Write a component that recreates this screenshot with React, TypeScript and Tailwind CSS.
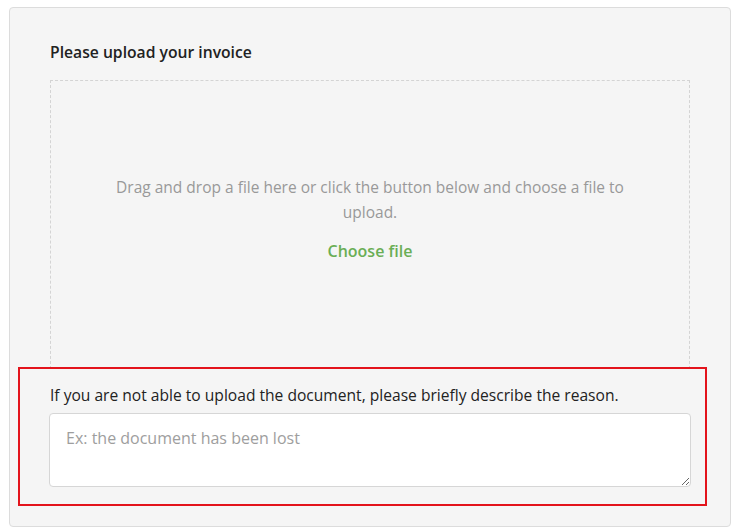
import React from "react";

export default function App() {
  return (
    <div className="bg-white w-[741px] h-[532px] pt-[7px] pl-[9px]" style={{ fontFamily: '"Open Sans", "Noto Sans", sans-serif' }}>
      <div className="relative w-[722px] h-[520px] rounded-[4px] border border-[#dcdcdc] bg-[#f5f5f5] pl-[40px] pr-[41px] pt-[32px]">
        <h2 className="text-[15.7px] leading-[24px] font-semibold text-[#222]">Please upload your invoice</h2>
        <div className="mt-[16px] h-[289px] w-[640px] border border-dashed border-[#d4d4d4] flex flex-col items-center pt-[94px]">
          <p className="text-[15.5px] leading-[25px] text-[#999] text-center px-[50px]">
            Drag and drop a file here or click the button below and choose a file to upload.
          </p>
          <button className="mt-[14px] text-[16px] leading-[24px] font-semibold text-[#6aae55]">Choose file</button>
        </div>
        <label className="block mt-[14px] text-[15.6px] leading-[24px] text-[#222]">
          If you are not able to upload the document, please briefly describe the reason.
        </label>
        <textarea
          className="block mt-[6px] -ml-px w-[642px] h-[74px] rounded-[4px] border border-[#d6d6d6] bg-white px-[16px] py-[12px] text-[16px] leading-[24px] text-[#333] placeholder:text-[#9e9e9e] outline-none"
          placeholder="Ex: the document has been lost"
        />
        <div className="absolute left-[8px] top-[359px] w-[689px] h-[139px] border-2 border-[#e3141c] pointer-events-none" />
      </div>
    </div>
  );
}
